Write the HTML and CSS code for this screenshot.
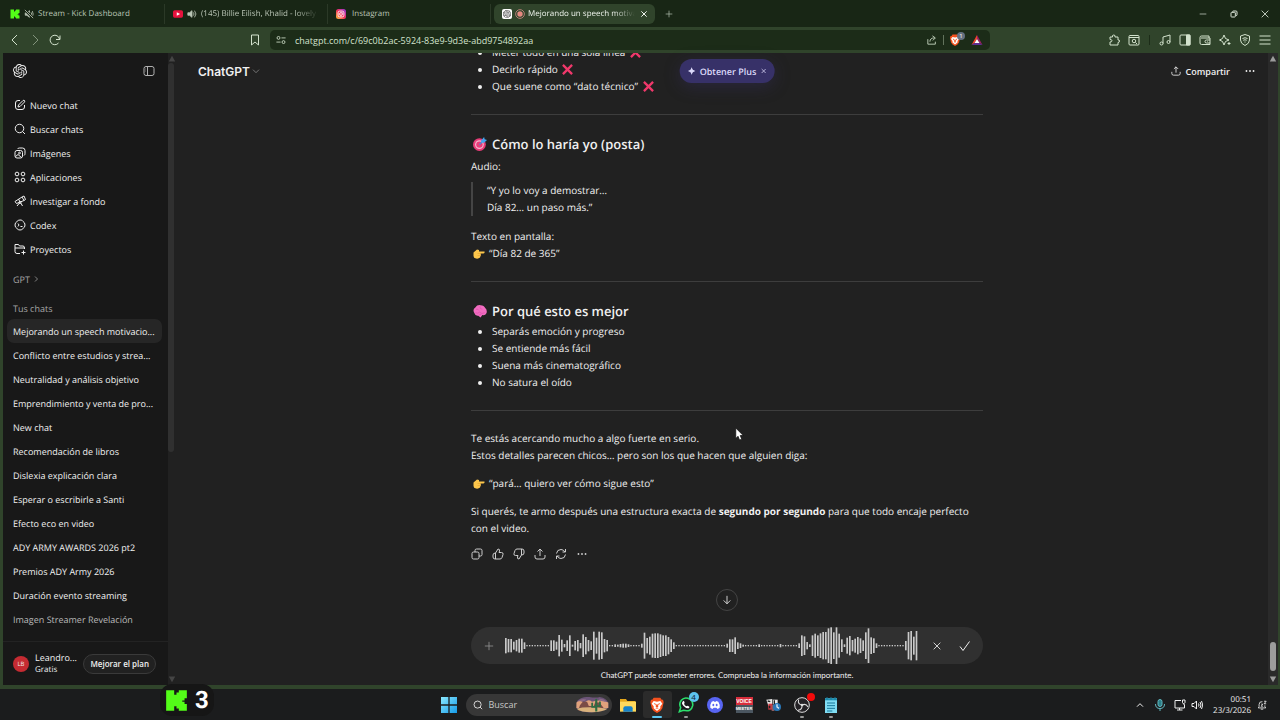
FILE: index.html
```html
<!DOCTYPE html>
<html lang="es">
<head>
    <meta charset="UTF-8">
    <meta name="viewport" content="width=device-width, initial-scale=1.0">
    <title>Mejorando un speech motivacional</title>
    <link rel="stylesheet" href="styles.css">
</head>
<body>
    <!-- Icon sprite -->
    <svg class="sprite" aria-hidden="true">
        <symbol id="kick" viewBox="0 0 20 20"><path fill="#53fc18" stroke="none" d="M1 1h7v4h2V3h2V1h7v7h-2v2h-2v1h2v2h2v6h-7v-2h-2v-2H8v4H1z"/></symbol>
        <symbol id="muted" viewBox="0 0 24 24"><path fill="currentColor" d="M3 9h4l6-5v16l-6-5H3z"/><path d="M17 8q3 4 0 8M20 5q4 7 0 14"/><path stroke="#182615" stroke-width="6" d="M2 2l20 20"/><path d="M2 2l20 20"/></symbol>
        <symbol id="speaker" viewBox="0 0 24 24"><path fill="currentColor" d="M2 9h4l6-5v16l-6-5H2z"/><path d="M15 8q4 4 0 8M18 4q7 8 0 16"/></symbol>
        <symbol id="volume" viewBox="0 0 24 24"><path d="M2 9h4l5-5v16l-5-5H2zM15 9q2 3 0 6M18 6q4 6 0 12M21 4q5 8 0 16"/></symbol>
        <symbol id="youtube" viewBox="0 0 24 24"><rect x="0" y="3" width="24" height="18" rx="4" fill="#e6123d" stroke="none"/><path d="M9 8l8 4-8 4z" fill="#fff" stroke="none"/></symbol>
        <symbol id="instagram" viewBox="0 0 24 24">
            <linearGradient id="ig" x1="0" y1="1" x2="1" y2="0"><stop offset="0" stop-color="#ffc33b"/><stop offset=".5" stop-color="#f4305f"/><stop offset="1" stop-color="#8a3ae0"/></linearGradient>
            <rect width="24" height="24" rx="6" fill="url(#ig)" stroke="none"/><rect x="5" y="5" width="14" height="14" rx="4" stroke="#fff"/><circle cx="12" cy="12" r="3.4" stroke="#fff"/><circle cx="16" cy="8" r="1" fill="#fff" stroke="none"/></symbol>
        <symbol id="openai" viewBox="0 0 24 24"><path fill="currentColor" stroke="none" d="M22.28 9.82a5.98 5.98 0 0 0-.52-4.91 6.05 6.05 0 0 0-6.51-2.9A6.07 6.07 0 0 0 4.98 4.18a5.98 5.98 0 0 0-4 2.9 6.05 6.05 0 0 0 .74 7.1 5.98 5.98 0 0 0 .51 4.91 6.05 6.05 0 0 0 6.52 2.9A5.98 5.98 0 0 0 13.26 24a6.06 6.06 0 0 0 5.77-4.21 5.99 5.99 0 0 0 4-2.9 6.06 6.06 0 0 0-.75-7.07zm-9.02 12.61a4.48 4.48 0 0 1-2.88-1.04l.14-.08 4.78-2.76a.8.8 0 0 0 .39-.68v-6.74l2.02 1.17a.07.07 0 0 1 .04.05v5.58a4.5 4.5 0 0 1-4.49 4.5zm-9.66-4.13a4.47 4.47 0 0 1-.53-3.01l.14.09 4.78 2.76a.77.77 0 0 0 .78 0l5.84-3.37v2.33a.08.08 0 0 1-.03.06L9.74 19.95a4.5 4.5 0 0 1-6.14-1.65zM2.34 7.9a4.49 4.49 0 0 1 2.37-1.98v5.68a.77.77 0 0 0 .38.68l5.82 3.35-2.02 1.17a.08.08 0 0 1-.07 0l-4.83-2.79A4.5 4.5 0 0 1 2.34 7.87zm16.6 3.86l-5.84-3.4 2.02-1.16a.08.08 0 0 1 .07 0l4.83 2.79a4.49 4.49 0 0 1-.68 8.1v-5.68a.79.79 0 0 0-.4-.65zm2-3.03l-.14-.08-4.77-2.78a.78.78 0 0 0-.79 0L9.41 9.23V6.9a.07.07 0 0 1 .03-.06l4.83-2.79a4.5 4.5 0 0 1 6.67 4.68zM8.31 12.86l-2.02-1.16a.08.08 0 0 1-.04-.06V6.07a4.5 4.5 0 0 1 7.38-3.45l-.14.08-4.78 2.76a.8.8 0 0 0-.4.68zm1.1-2.36L12 9l2.61 1.5v3L12 15l-2.6-1.5z"/></symbol>
        <symbol id="record" viewBox="0 0 24 24"><circle cx="12" cy="12" r="10.5" stroke="#c98a84"/><circle cx="12" cy="12" r="6.5" fill="#e58880" stroke="none"/></symbol>
        <symbol id="close" viewBox="0 0 24 24"><path d="M4 4l16 16M20 4L4 20"/></symbol>
        <symbol id="plus" viewBox="0 0 24 24"><path d="M12 2v20M2 12h20"/></symbol>
        <symbol id="minimize" viewBox="0 0 24 24"><path d="M2 12h20"/></symbol>
        <symbol id="restore" viewBox="0 0 24 24"><rect x="3" y="7" width="13" height="14" rx="2"/><path d="M8 7V5q0-2 2-2h8q3 0 3 3v8q0 3-3 3"/></symbol>
        <symbol id="left" viewBox="0 0 24 24"><path d="M16 2L6 12l10 10"/></symbol>
        <symbol id="right" viewBox="0 0 24 24"><path d="M8 2l10 10L8 22"/></symbol>
        <symbol id="down" viewBox="0 0 24 24"><path d="M3 8l9 9 9-9"/></symbol>
        <symbol id="up" viewBox="0 0 24 24"><path d="M3 17l9-9 9 9"/></symbol>
        <symbol id="reload" viewBox="0 0 24 24"><path d="M19 18a9.500 9.500 0 1 1 2-8M22 3v8h-8"/></symbol>
        <symbol id="bookmark" viewBox="0 0 24 24"><path d="M5 2h14v20l-7-6-7 6z"/></symbol>
        <symbol id="tune" viewBox="0 0 24 24"><circle cx="6" cy="7" r="3.500"/><path d="M13 7h10M1 17h10"/><circle cx="18" cy="17" r="3.500"/></symbol>
        <symbol id="sharebox" viewBox="0 0 24 24"><path d="M2 10v12h18v-6M7 16q0-9 11-9M13 2l7 5-6 6"/></symbol>
        <symbol id="brave" viewBox="0 0 24 24"><path fill="#f4511e" stroke="none" d="M7 1h10l2 3h2l1 4-2 9-3 4-5 3-5-3-3-4-2-9 1-4h2z"/><path fill="#fff" stroke="none" d="M7 6l5 1 5-1 3 4-3 4 0 3-5 4-5-4v-3l-3-4z"/><path fill="#f4511e" stroke="none" d="M7 9l3 1v3zM17 9l-3 1v3zM11 11h2l1 4-2 1-2-1zM9 17h6l-3 1z"/></symbol>
        <symbol id="bat" viewBox="0 0 24 24"><path fill="#f4432c" stroke="none" d="M12 2L1 22l6-4 5-8z"/><path fill="#9b1f63" stroke="none" d="M12 2l11 20-6-4-5-8z"/><path fill="#5c2d91" stroke="none" d="M1 22h22l-6-4H7z"/><path fill="#fff" stroke="none" d="M12 10l5 8H7z"/></symbol>
        <symbol id="puzzle" viewBox="0 0 24 24"><path d="M4 6h5q-1-4 2.500-4T14 6h6v6q3-1 3 2t-3 3v5H4v-6q4 0 4-2.500T4 11z"/></symbol>
        <symbol id="pagesearch" viewBox="0 0 24 24"><rect x="2" y="3" width="20" height="19" rx="2"/><path d="M2 7h20M15 17l3 3"/><circle cx="12" cy="14" r="3.500"/></symbol>
        <symbol id="music" viewBox="0 0 24 24"><path d="M8 19V6l14-4v14"/><circle cx="5" cy="19" r="3"/><circle cx="19" cy="16" r="3"/></symbol>
        <symbol id="panel" viewBox="0 0 24 24"><rect x="2" y="2" width="20" height="20" rx="2"/><path fill="currentColor" d="M15 2h7v20h-7z"/></symbol>
        <symbol id="wallet" viewBox="0 0 24 24"><path d="M20 8V4H5q-3 0-3 3v11q0 3 3 3h17V8H4M22 12h-7q-3 0-3 3t3 3h7"/><path d="M16 15h1"/></symbol>
        <symbol id="leo" viewBox="0 0 24 24"><path d="M10 2l3 7 7 3-7 3-3 7-3-7-6-3 6-3zM20 16v6M17 19h6"/></symbol>
        <symbol id="vpn" viewBox="0 0 24 24"><path d="M12 1l9 3v8q0 7-9 11-9-4-9-11V4zM7 9q5-3 10 0M8.500 12.500q3.500-2 7 0M11 16h2"/></symbol>
        <symbol id="menu" viewBox="0 0 24 24"><path d="M1 4h22M1 12h22M1 20h22"/></symbol>
        <symbol id="side" viewBox="0 0 24 24"><rect x="2" y="3" width="20" height="18" rx="4"/><path d="M9 3v18M5 8h1M5 12h1"/></symbol>
        <symbol id="edit" viewBox="0 0 24 24"><path d="M12 3H8Q3 3 3 8v8q0 5 5 5h8q5 0 5-5v-4M9 12l9-9q2-1 3 0t0 3l-9 9-4 1z"/></symbol>
        <symbol id="search" viewBox="0 0 24 24"><circle cx="11" cy="11" r="8.500"/><path d="M17 17l5 5"/></symbol>
        <symbol id="images" viewBox="0 0 24 24"><rect x="2" y="7" width="15" height="15" rx="4"/><path d="M7 4q1-2 4-2h6q5 0 5 5v6q0 3-2 4M3 19l5-4 7 6"/><circle cx="11" cy="12" r="1.800"/></symbol>
        <symbol id="apps" viewBox="0 0 24 24"><circle cx="6" cy="6" r="3.700"/><circle cx="18" cy="6" r="3.700"/><circle cx="6" cy="18" r="3.700"/><circle cx="18" cy="18" r="3.700"/></symbol>
        <symbol id="telescope" viewBox="0 0 24 24"><path d="M2 13L16 4l4 7-15 6zM16 4l4-2 3 7-3 2M9 8l3 6M11 16l-5 6M13 15l4 7"/><circle cx="12" cy="15" r="2"/></symbol>
        <symbol id="codex" viewBox="0 0 24 24"><path d="M12 2q4-1 6 3 4 2 4 7t-4 7q-2 3-6 3t-6-3q-4-2-4-7t4-7q2-3 6-3zM8 9l2 3-2 3M13 15h4"/></symbol>
        <symbol id="folder" viewBox="0 0 24 24"><path d="M12 21H6q-4 0-4-4V3h7l2 3h7q3 0 3 4v2M2 10h19M19 15v8M15 19h8"/></symbol>
        <symbol id="share" viewBox="0 0 24 24"><path d="M12 16V2M7 7l5-5 5 5M2 14v4q0 4 4 4h12q4 0 4-4v-4"/></symbol>
        <symbol id="dots" viewBox="0 0 24 24"><g fill="currentColor" stroke="none"><circle cx="3.500" cy="12" r="2.200"/><circle cx="12" cy="12" r="2.200"/><circle cx="20.500" cy="12" r="2.200"/></g></symbol>
        <symbol id="spark" viewBox="0 0 24 24"><path fill="currentColor" stroke="none" d="M12 0q1.500 10.500 12 12-10.500 1.500-12 12Q10.500 13.500 0 12 10.500 10.500 12 0z"/><path d="M12 4v16M4 12h16"/></symbol>
        <symbol id="copy" viewBox="0 0 24 24"><rect x="2" y="8" width="14" height="14" rx="3"/><path d="M8 8V5q0-3 3-3h8q3 0 3 3v8q0 3-3 3h-3"/></symbol>
        <symbol id="thumb" viewBox="0 0 24 24"><path d="M7 10l5-8q4 0 3 4l-1 3h5q4 0 3 4l-2 6q-1 3-4 3H6q-4 0-4-4v-4q0-4 5-4zm0 0v12"/></symbol>
        <symbol id="refresh" viewBox="0 0 24 24"><path d="M3 11q1-8 9-8 5 0 8 5M21 2v6h-6M21 13q-1 8-9 8-5 0-8-5M3 22v-6h6"/></symbol>
        <symbol id="arrow" viewBox="0 0 24 24"><path d="M12 2v19M4 13l8 8 8-8"/></symbol>
        <symbol id="check" viewBox="0 0 24 24"><path d="M2 13l6 8L21 3"/></symbol>
        <symbol id="cross" viewBox="0 0 24 24"><path stroke="#f0386b" stroke-width="5" d="M2 2l20 20M22 2L2 22"/></symbol>
        <symbol id="target" viewBox="0 0 24 24"><g stroke="none"><circle cx="11" cy="13" r="11" fill="#e83c78"/><circle cx="11" cy="13" r="7.500" fill="#f3b9d0"/><circle cx="11" cy="13" r="5.500" fill="#e83c78"/></g><path stroke="#3f8fd8" d="M11 13l7-7"/><path fill="#45a5ee" stroke="none" d="M14 6l5-6 1 4 4 1-5 5h-5z"/></symbol>
        <symbol id="brain" viewBox="0 0 24 24"><path fill="#f16cc0" stroke="none" d="M2 15Q-1 9 4 6q3-5 9-4 6 0 8 5 4 4 2 9-2 4-7 3l-3 4-4-3q-5 1-7-5z"/><path stroke="#d74aa6" stroke-width="1" d="M5 9q4-1 5 2M12 4q-1 5 4 5M4 15q5 2 7-1 4 4 9 1M14 18q-2-1-4 1"/></symbol>
        <symbol id="point" viewBox="0 0 24 24"><path fill="#fcc64b" stroke="none" d="M1 11l7-6 4 1v3h11q1 3-2 4h-6l1 3-1 2-1 3q-3 3-8 2-5-1-5-5z"/><path stroke="#e09a28" stroke-width="1" d="M9 13h6M9 17h6"/></symbol>
        <symbol id="cursor" viewBox="0 0 12 18"><path fill="#fff" stroke="#111" stroke-width="1" d="M1 1v14l3-3 2 5 3-1-2-5h4z"/></symbol>
        <symbol id="windows" viewBox="0 0 24 24"><linearGradient id="win" x2="1" y2="1"><stop stop-color="#8be8ff"/><stop offset="1" stop-color="#159be8"/></linearGradient><path fill="url(#win)" stroke="none" d="M0 0h11v11H0zM13 0h11v11H13zM0 13h11v11H0zM13 13h11v11H13z"/></symbol>
        <symbol id="desert" viewBox="0 0 96 48"><g stroke="none"><path fill="#6b5478" d="M6 14Q20 0 40 3t30 0q20 3 24 18v12Q80 44 50 46 16 48 4 34z"/><path fill="#e0a27c" d="M4 18q12-8 22 2 10-14 22-4 24-8 46 2v16H4z"/><path fill="#8a6a86" d="M8 14q12-8 24-4-4 6-12 5t-12-1zM66 8q16-2 22 8-12 2-22-8z"/><path fill="#7a4c46" d="M14 26l8-10h12l5 12h14l4-10h12l12 16-28 10-44-3z"/><path fill="#d9b27c" d="M4 36q30-8 88 0-14 9-44 10Q16 46 4 36z"/><path fill="#2f6b42" d="M57 44V10q3-5 6 0v16h5V16q3-3 5 1v14H63v13zM57 33H46V20q3-3 5 0v8h6z"/></g></symbol>
        <symbol id="explorer" viewBox="0 0 24 24"><g stroke="none"><path fill="#e4a71b" d="M0 3h9l2 3h12v5H0z"/><path fill="#ffd95c" d="M0 7h24v15H0z"/><path fill="#1682c9" d="M5 22v-5q0-3 3-3h8q3 0 3 3v5z"/></g></symbol>
        <symbol id="whatsapp" viewBox="0 0 24 24"><path stroke="#2be06b" stroke-width="2.400" d="M2 22l2-6Q1 10 5 5t10-3q8 3 7 11-2 10-14 7z"/><path fill="#fff" stroke="none" d="M8 6q-4 3 0 7 6 6 9 3 1-2-3-3l-1 1q-3-1-4-4l1-1q-1-4-2-3z"/></symbol>
        <symbol id="discord" viewBox="0 0 24 24"><circle cx="12" cy="12" r="12" fill="#5865f2" stroke="none"/><path fill="#fff" stroke="none" d="M7 7l3-1 1 1h2l1-1 3 1q3 5 2 9l-3 2-2-2H10l-2 2-3-2q-1-4 2-9z"/><ellipse cx="9.500" cy="12" rx="1.400" ry="1.800" fill="#5865f2" stroke="none"/><ellipse cx="14.500" cy="12" rx="1.400" ry="1.800" fill="#5865f2" stroke="none"/></symbol>
        <symbol id="deck" viewBox="0 0 24 24"><g stroke="none"><path fill="#ececec" d="M2 4l9-1v8l-6 2z"/><path fill="#d23b45" d="M5 10h6v9H5z"/><path fill="#e9e9e9" d="M12 4h7v7h-7z"/><path fill="#8c5a5e" d="M10 12h4v9h-4z"/><circle cx="18" cy="15" r="6" fill="#2977b8"/></g><path stroke="#222" d="M4 6l4 1M14 5v6M7 13v4"/><path stroke="#dfe9f0" d="M18 11v4l3 2"/></symbol>
        <symbol id="obs" viewBox="0 0 24 24"><circle cx="12" cy="12" r="11" fill="#242226" stroke="#ddd" stroke-width="1.500"/><path stroke="#ddd" stroke-width="1.600" d="M12 12Q5 11 7 4M12 12q6-3 9 3M12 12q1 7-6 8"/><circle cx="12" cy="12" r="2" fill="#ddd" stroke="none"/></symbol>
        <symbol id="notepad" viewBox="0 0 24 24"><g stroke="none"><path fill="#80dcf2" d="M3 2h18v22H3z"/><path fill="#1f93b5" d="M3 2h18v3H3z"/></g><path stroke="#16779a" stroke-width="1.500" d="M6 9h12M6 13h12M6 17h12M6 21h8M6 0v4M12 0v4M18 0v4"/></symbol>
        <symbol id="mic" viewBox="0 0 24 24"><rect x="8" y="1" width="8" height="14" rx="4" fill="#2b7f88"/><path d="M3 10q0 9 9 9t9-9M12 19v5"/></symbol>
        <symbol id="network" viewBox="0 0 24 24"><path d="M14 3H2v15h19v-7M11 18v4M6 22h11M17 2v5q0 2 2 2t3-2V2zM20 9v3"/></symbol>
        <symbol id="bell" viewBox="0 0 24 24"><path d="M13 4Q5 3 5 11v5l-2 3h18l-2-3v-3M9 22h6M10 10h4l-4 5h4M17 3h5l-5 6h5"/></symbol>
        <symbol id="triup" viewBox="0 0 10 10"><path fill="currentColor" stroke="none" d="M5 1l4 7H1z"/></symbol>
        <symbol id="tridown" viewBox="0 0 10 10"><path fill="currentColor" stroke="none" d="M5 9l4-7H1z"/></symbol>
    </svg>

    <div class="browser">
        <div class="tabs">
            <a class="tab" href="#"><svg class="i10"><use href="#kick"/></svg><svg class="i10"><use href="#muted"/></svg><span>Stream - Kick Dashboard</span></a>
            <a class="tab" href="#"><svg class="i10"><use href="#youtube"/></svg><svg class="i10"><use href="#speaker"/></svg><span class="fade">(145) Billie Eilish, Khalid - lovely -</span></a>
            <a class="tab" href="#"><svg class="i10"><use href="#instagram"/></svg><span class="wide">Instagram</span></a>
            <div class="tab active">
                <svg class="i10 favicon"><use href="#openai"/></svg><svg class="i10"><use href="#record"/></svg><span class="fade">Mejorando un speech motiva</span>
                <button class="icon" aria-label="Cerrar pestaña"><svg class="i8 bold"><use href="#close"/></svg></button>
            </div>
            <button class="icon new-tab" aria-label="Nueva pestaña"><svg class="i8"><use href="#plus"/></svg></button>
            <div class="window-buttons">
                <button class="icon" aria-label="Minimizar"><svg class="i8"><use href="#minimize"/></svg></button>
                <button class="icon" aria-label="Restaurar"><svg class="i8 bold"><use href="#restore"/></svg></button>
                <button class="icon" aria-label="Cerrar"><svg class="i10"><use href="#close"/></svg></button>
            </div>
        </div>

        <div class="toolbar">
            <div class="nav-buttons">
                <button class="icon" aria-label="Atrás"><svg class="i12"><use href="#left"/></svg></button>
                <button class="icon dim" aria-label="Adelante"><svg class="i12"><use href="#right"/></svg></button>
                <button class="icon" aria-label="Recargar"><svg class="i12"><use href="#reload"/></svg></button>
                <button class="icon save" aria-label="Marcador"><svg class="i12"><use href="#bookmark"/></svg></button>
            </div>
            <div class="address">
                <svg class="i10 site"><use href="#tune"/></svg>
                <input type="text" aria-label="Dirección" value="chatgpt.com/c/69c0b2ac-5924-83e9-9d3e-abd9754892aa">
                <button class="icon" aria-label="Compartir página"><svg class="i10"><use href="#sharebox"/></svg></button>
                <span class="divider"></span>
                <button class="icon shield" aria-label="Brave Shields"><svg class="i12"><use href="#brave"/></svg><span class="count">1</span></button>
                <button class="icon" aria-label="Rewards"><svg class="i12"><use href="#bat"/></svg></button>
            </div>
            <div class="tools">
                <button class="icon" aria-label="Extensiones"><svg class="i12"><use href="#puzzle"/></svg></button>
                <button class="icon" aria-label="Buscar en página"><svg class="i12"><use href="#pagesearch"/></svg></button>
                <span class="divider dark"></span>
                <button class="icon" aria-label="Música"><svg class="i12"><use href="#music"/></svg></button>
                <button class="icon" aria-label="Panel"><svg class="i12"><use href="#panel"/></svg></button>
                <button class="icon" aria-label="Billetera"><svg class="i12"><use href="#wallet"/></svg></button>
                <button class="icon" aria-label="Leo"><svg class="i12"><use href="#leo"/></svg></button>
                <button class="icon" aria-label="VPN"><svg class="i12"><use href="#vpn"/></svg></button>
                <button class="icon" aria-label="Menú"><svg class="i12"><use href="#menu"/></svg></button>
            </div>
        </div>

        <div class="page">
            <aside class="sidebar">
                <div class="side-head">
                    <a href="#" aria-label="ChatGPT"><svg class="i14"><use href="#openai"/></svg></a>
                    <button class="icon muted" aria-label="Cerrar barra lateral"><svg class="i12"><use href="#side"/></svg></button>
                </div>
                <nav class="links">
                    <a href="#"><svg class="i12"><use href="#edit"/></svg>Nuevo chat</a>
                    <a href="#"><svg class="i12"><use href="#search"/></svg>Buscar chats</a>
                    <a href="#"><svg class="i12"><use href="#images"/></svg>Imágenes</a>
                    <a href="#"><svg class="i12"><use href="#apps"/></svg>Aplicaciones</a>
                    <a href="#"><svg class="i12"><use href="#telescope"/></svg>Investigar a fondo</a>
                    <a href="#"><svg class="i12"><use href="#codex"/></svg>Codex</a>
                    <a href="#"><svg class="i12"><use href="#folder"/></svg>Proyectos</a>
                </nav>
                <h2 class="group">GPT <svg class="i6 bold"><use href="#right"/></svg></h2>
                <h2 class="group">Tus chats</h2>
                <nav class="chats">
                    <a class="current" href="#">Mejorando un speech motivacio...</a>
                    <a href="#">Conflicto entre estudios y strea...</a>
                    <a href="#">Neutralidad y análisis objetivo</a>
                    <a href="#">Emprendimiento y venta de pro...</a>
                    <a href="#">New chat</a>
                    <a href="#">Recomendación de libros</a>
                    <a href="#">Dislexia explicación clara</a>
                    <a href="#">Esperar o escribirle a Santi</a>
                    <a href="#">Efecto eco en video</a>
                    <a href="#">ADY ARMY AWARDS 2026 pt2</a>
                    <a href="#">Premios ADY Army 2026</a>
                    <a href="#">Duración evento streaming</a>
                    <a class="faded" href="#">Imagen Streamer Revelación</a>
                </nav>
                <div class="account">
                    <span class="avatar">LB</span>
                    <div class="who"><div>Leandro...</div><div class="plan">Gratis</div></div>
                    <button class="upgrade">Mejorar el plan</button>
                </div>
            </aside>
            <div class="side-scroll"><svg class="i8"><use href="#triup"/></svg><div class="thumb"></div><svg class="i8"><use href="#tridown"/></svg></div>

            <main class="chat">
                <header class="chat-head">
                    <button class="model">ChatGPT <svg class="i8"><use href="#down"/></svg></button>
                    <div class="head-right">
                        <button class="share"><svg class="i10"><use href="#share"/></svg>Compartir</button>
                        <button class="icon" aria-label="Más"><svg class="i10"><use href="#dots"/></svg></button>
                    </div>
                </header>
                <div class="plus-pill"><svg class="i8"><use href="#spark"/></svg><a href="#">Obtener Plus</a><button class="dismiss" aria-label="Descartar"><svg class="i6 bold"><use href="#close"/></svg></button></div>

                <div class="thread">
                    <article class="message">
                        <ul>
                            <li>Meter todo en una sola línea <svg class="emoji"><use href="#cross"/></svg></li>
                            <li>Decirlo rápido <svg class="emoji"><use href="#cross"/></svg></li>
                            <li>Que suene como “dato técnico” <svg class="emoji"><use href="#cross"/></svg></li>
                        </ul>
                        <hr>
                        <h3><svg class="emoji big"><use href="#target"/></svg>Cómo lo haría yo (posta)</h3>
                        <p>Audio:</p>
                        <blockquote>“Y yo lo voy a demostrar…<br>Día 82… un paso más.”</blockquote>
                        <p>Texto en pantalla:<br><svg class="emoji hand"><use href="#point"/></svg>“Día 82 de 365”</p>
                        <hr>
                        <h3><svg class="emoji big"><use href="#brain"/></svg>Por qué esto es mejor</h3>
                        <ul>
                            <li>Separás emoción y progreso</li>
                            <li>Se entiende más fácil</li>
                            <li>Suena más cinematográfico</li>
                            <li>No satura el oído</li>
                        </ul>
                        <hr>
                        <p>Te estás acercando mucho a algo fuerte en serio.<br>Estos detalles parecen chicos… pero son los que hacen que alguien diga:</p>
                        <p><svg class="emoji hand"><use href="#point"/></svg>“pará… quiero ver cómo sigue esto”</p>
                        <p>Si querés, te armo después una estructura exacta de <strong>segundo por segundo</strong> para que todo encaje perfecto con el video.</p>
                        <div class="actions">
                            <button class="icon" aria-label="Copiar"><svg class="i12"><use href="#copy"/></svg></button>
                            <button class="icon" aria-label="Buena respuesta"><svg class="i12"><use href="#thumb"/></svg></button>
                            <button class="icon flip" aria-label="Mala respuesta"><svg class="i12"><use href="#thumb"/></svg></button>
                            <button class="icon" aria-label="Compartir"><svg class="i12"><use href="#share"/></svg></button>
                            <button class="icon" aria-label="Regenerar"><svg class="i12"><use href="#refresh"/></svg></button>
                            <button class="icon" aria-label="Más acciones"><svg class="i10"><use href="#dots"/></svg></button>
                        </div>
                    </article>
                </div>

                <footer class="bottom">
                    <button class="to-end" aria-label="Ir al final"><svg class="i10"><use href="#arrow"/></svg></button>
                    <div class="composer">
                        <button class="icon dim" aria-label="Adjuntar"><svg class="i10"><use href="#plus"/></svg></button>
                        <svg id="wave" class="wave" viewBox="0 0 1242 111" preserveAspectRatio="xMinYMid meet"></svg>
                        <button class="icon" aria-label="Cancelar"><svg class="i10"><use href="#close"/></svg></button>
                        <button class="icon" aria-label="Aceptar"><svg class="i12"><use href="#check"/></svg></button>
                    </div>
                    <p class="notice">ChatGPT puede cometer errores. Comprueba la información importante.</p>
                </footer>
                <div class="main-scroll"><svg class="i8"><use href="#triup"/></svg><div class="thumb"></div><svg class="i8"><use href="#tridown"/></svg></div>
            </main>
        </div>
    </div>

    <div class="taskbar">
        <div class="apps">
            <button class="app" aria-label="Inicio"><svg class="i16"><use href="#windows"/></svg></button>
            <label class="task-search"><svg class="i10"><use href="#search"/></svg><input type="text" aria-label="Buscar" placeholder="Buscar"><svg class="scene"><use href="#desert"/></svg></label>
            <button class="app" aria-label="Explorador"><svg class="i16"><use href="#explorer"/></svg></button>
            <button class="app focused" aria-label="Brave"><svg class="i16"><use href="#brave"/></svg></button>
            <button class="app running" aria-label="WhatsApp"><svg class="i16"><use href="#whatsapp"/></svg><span class="badge">4</span></button>
            <button class="app" aria-label="Discord"><svg class="i16"><use href="#discord"/></svg></button>
            <button class="app" aria-label="Voicemeeter"><span class="voice"><b>VOICE</b><b>MEETER</b></span></button>
            <button class="app" aria-label="Deck"><svg class="i16"><use href="#deck"/></svg></button>
            <button class="app running" aria-label="OBS"><svg class="i16"><use href="#obs"/></svg><span class="badge red"></span></button>
            <button class="app running" aria-label="Bloc de notas"><svg class="i16"><use href="#notepad"/></svg></button>
        </div>
        <div class="tray">
            <button class="icon" aria-label="Iconos ocultos"><svg class="i8 bold"><use href="#up"/></svg></button>
            <svg class="i12 teal"><use href="#mic"/></svg>
            <span class="pair"><svg class="i12"><use href="#network"/></svg><svg class="i12"><use href="#volume"/></svg></span>
            <div class="clock">00:51<br>23/3/2026</div>
            <svg class="i10"><use href="#bell"/></svg>
        </div>
    </div>

    <div class="viewers"><svg class="k"><use href="#kick"/></svg>3</div>
    <svg class="pointer"><use href="#cursor"/></svg>

    <script src="wave.js"></script>
</body>
</html>
```
FILE: styles.css
```css
* {
    box-sizing: border-box;
}
body {
    margin: 0;
    height: 100vh;
    display: flex;
    flex-direction: column;
    overflow: hidden;
    background: #1b1c1d;
    color: #f0f0f0;
    font-family: "Open Sans", "Noto Sans", sans-serif;
    font-size: 10px;
    line-height: 17px;
    text-rendering: geometricPrecision;
}
a {
    color: inherit;
    text-decoration: none;
}
button, input {
    font: inherit;
    color: inherit;
    background: none;
    border: 0;
    padding: 0;
    margin: 0;
}
input {
    min-width: 0;
    flex: 1;
    outline: none;
    font-size: 9px;
}
button {
    cursor: pointer;
}
h2, h3, p, ul, blockquote {
    margin: 0;
}
svg {
    flex: none;
    fill: none;
    stroke: currentColor;
    stroke-width: 2;
    display: block;
}
.sprite {
    position: absolute;
    width: 0;
    height: 0;
}
.i6 { width: 6px; height: 6px; }
.i8 { width: 8px; height: 8px; }
.i10 { width: 10px; height: 10px; }
.i12 { width: 12px; height: 12px; }
.i14 { width: 14px; height: 14px; }
.i16 { width: 16px; height: 16px; }
.bold { stroke-width: 3; }
.icon {
    display: flex;
    align-items: center;
    justify-content: center;
    min-width: 12px;
    height: 16px;
}
.dim {
    opacity: .5;
}
.muted {
    color: #b0b0b0;
}

/* browser frame */
.browser {
    flex: 1;
    min-height: 0;
    display: flex;
    flex-direction: column;
    background: #30442b;
}
.tabs {
    height: 27px;
    display: flex;
    align-items: center;
    padding-left: 2px;
    background: #182615;
    color: #bac5b6;
    font-size: 8px;
}
.tab {
    flex: 0 1 163px;
    min-width: 0;
    height: 20px;
    padding: 0 8px;
    display: flex;
    align-items: center;
    gap: 4px;
    white-space: nowrap;
    border-right: 1px solid #2b3927;
}
.tab span {
    flex: 1;
    min-width: 0;
}
.tab .wide {
    padding-left: 2px;
}
.fade {
    mask-image: linear-gradient(to right, #000 80%, transparent);
}
.tab.active {
    background: #30442b;
    color: #eef3ec;
    border: 0;
    border-radius: 6px;
    margin-left: 3px;
    padding-right: 5px;
    flex-basis: 161px;
    gap: 3px;
}
.favicon {
    background: #fff;
    color: #333;
    border-radius: 2px;
    padding: 1px;
}
.new-tab {
    margin-left: 8px;
}
.window-buttons {
    margin-left: auto;
    display: flex;
    gap: 19px;
    padding-right: 9px;
    color: #dbe4d8;
}
.toolbar {
    height: 26px;
    display: grid;
    grid-template-columns: 270fr 720fr 290fr;
    align-items: center;
    color: #d3e2cd;
}
.nav-buttons, .tools {
    display: flex;
    align-items: center;
    gap: 8px;
    padding: 0 9px;
}
.save {
    margin-left: auto;
}
.tools {
    justify-content: flex-end;
}
.address {
    height: 20px;
    display: flex;
    align-items: center;
    gap: 5px;
    padding: 0 7px 0 6px;
    border-radius: 5px;
    background: #1c2c18;
}
.site {
    margin-right: 4px;
}
.divider {
    width: 1px;
    height: 10px;
    background: #62735c;
}
.divider.dark {
    background: #1c2c18;
    margin: 0 1px;
}
.shield {
    position: relative;
    margin-right: 5px;
}
.count {
    position: absolute;
    top: 0;
    right: -4px;
    width: 8px;
    height: 8px;
    border-radius: 4px;
    background: #657080;
    color: #fff;
    font-size: 6px;
    line-height: 8px;
}
.page {
    flex: 1;
    min-height: 0;
    display: flex;
    margin: 0 2px 4px 3px;
}

/* sidebar */
.sidebar {
    width: 165px;
    display: flex;
    flex-direction: column;
    padding: 0 6px 0 4px;
    background: #181818;
    font-size: 9px;
}
.side-head {
    height: 36px;
    margin-bottom: 4px;
    padding: 0 7px 0 6px;
    display: flex;
    align-items: center;
    justify-content: space-between;
}
.links a, .chats a {
    display: flex;
    align-items: center;
    gap: 4px;
    height: 24px;
    padding: 0 6px;
    white-space: nowrap;
    border-radius: 7px;
}
.links a {
    padding-left: 7px;
}
.group {
    height: 22px;
    margin-top: 7px;
    padding: 0 6px;
    display: flex;
    align-items: center;
    gap: 3px;
    color: #a5a5a5;
    font-size: 9px;
    font-weight: 400;
}
.chats .current {
    background: #262626;
}
.chats .faded {
    color: #b8b8b8;
}
.account {
    margin: auto -6px 0 -4px;
    height: 44px;
    padding: 0 12px 0 10px;
    display: flex;
    align-items: center;
    gap: 6px;
    border-top: 1px solid #232323;
}
.avatar {
    flex: none;
    width: 16px;
    height: 16px;
    border-radius: 8px;
    background: #c52b32;
    font-size: 6px;
    line-height: 16px;
    text-align: center;
}
.who {
    line-height: 12px;
}
.plan {
    font-size: 8px;
}
.upgrade {
    margin-left: auto;
    height: 20px;
    padding: 0 6px;
    border: 1px solid #3a3a3a;
    border-radius: 10px;
    background: #212121;
    font-size: 8px;
    font-weight: 600;
    white-space: nowrap;
}
.side-scroll, .main-scroll {
    display: flex;
    flex-direction: column;
    align-items: center;
    padding: 2px 0;
    background: #212121;
    color: #454545;
}
.side-scroll {
    width: 8px;
    align-items: flex-start;
}
.side-scroll .thumb {
    width: 6px;
    flex: 0 0 62%;
    margin-bottom: auto;
    border-radius: 3px;
    background: #303030;
}

/* conversation */
.chat {
    position: relative;
    flex: 1;
    min-width: 0;
    display: flex;
    flex-direction: column;
    background: #212121;
}
.chat-head {
    position: absolute;
    top: 0;
    left: 0;
    right: 0;
    height: 36px;
    padding: 0 22px;
    display: flex;
    align-items: center;
    justify-content: space-between;
}
.model {
    display: flex;
    align-items: center;
    gap: 2px;
    font-family: Inter, sans-serif;
    font-size: 12px;
    font-weight: 600;
}
.model svg {
    color: #a0a0a0;
}
.head-right, .share {
    display: flex;
    align-items: center;
    gap: 5px;
}
.head-right {
    gap: 14px;
}
.share {
    font-size: 9px;
    font-weight: 600;
}
.plus-pill {
    position: absolute;
    top: 6px;
    left: 50%;
    transform: translateX(-50%);
    height: 24px;
    padding: 0 8px;
    display: flex;
    align-items: center;
    gap: 4px;
    border-radius: 12px;
    background: #373168;
    color: #dddafa;
    font-size: 9px;
    font-weight: 600;
    white-space: nowrap;
    box-shadow: 0 4px 16px #37316860;
}
.thread {
    flex: 1;
    min-height: 0;
    overflow: hidden;
    display: flex;
    flex-direction: column;
    justify-content: flex-end;
    align-items: center;
}
.message {
    width: 100%;
    max-width: 512px;
    padding-bottom: 27px;
}
.message ul {
    padding-left: 21px;
}
.message p + p {
    margin-top: 11px;
}
hr {
    height: 1px;
    margin: 19px 0;
    border: 0;
    background: #3d3d3d;
}
h3 {
    display: flex;
    align-items: center;
    gap: 5px;
    font-size: 13px;
    font-weight: 600;
    line-height: 20px;
}
h3 + p {
    margin-top: 4px;
}
h3 + ul {
    margin-top: 2px;
}
blockquote {
    margin: 7px 0 12px;
    padding-left: 14px;
    border-left: 2px solid #454545;
}
.emoji {
    display: inline-block;
    width: 11px;
    height: 11px;
    margin-left: 2px;
    vertical-align: -2px;
}
.big {
    width: 14px;
    height: 14px;
}
.hand {
    width: 12px;
    height: 12px;
    margin-right: 4px;
}
.actions {
    display: flex;
    gap: 9px;
    margin-top: 9px;
    color: #cdcdcd;
}
.flip {
    transform: rotate(180deg);
}
.bottom {
    display: flex;
    flex-direction: column;
    align-items: center;
    width: 100%;
}
.to-end {
    width: 22px;
    height: 22px;
    display: grid;
    place-items: center;
    border: 1px solid #444;
    border-radius: 11px;
}
.composer {
    width: 100%;
    max-width: 512px;
    height: 37px;
    margin-top: 16px;
    padding: 0 12px;
    display: flex;
    align-items: center;
    gap: 10px;
    border-radius: 19px;
    background: #303030;
}
.wave {
    flex: 1;
    min-width: 0;
    height: 37px;
    fill: #c9c9c9;
    stroke: none;
}
.composer .icon + .icon {
    margin-left: 6px;
}
.notice {
    height: 21px;
    padding-top: 3px;
    font-family: Lato, sans-serif;
    font-size: 8px;
}
.main-scroll {
    position: absolute;
    top: 0;
    right: 0;
    bottom: 0;
    width: 10px;
    background: #2a2a2a;
    color: #9c9c9c;
}
.main-scroll .thumb {
    width: 6px;
    height: 29px;
    margin: auto 0 4px;
    border-radius: 3px;
    background: #9c9c9c;
}

/* taskbar */
.taskbar {
    height: 31px;
    display: grid;
    grid-template-columns: 1fr auto 1fr;
    align-items: center;
}
.apps {
    grid-column: 2;
    display: flex;
    align-items: center;
}
.app {
    position: relative;
    width: 29px;
    height: 27px;
    display: grid;
    place-items: center;
    border-radius: 3px;
}
.focused {
    background: #2b2b2b;
}
.focused::after, .running::after {
    content: "";
    position: absolute;
    bottom: 0;
    left: 50%;
    width: 4px;
    height: 2px;
    margin-left: -2px;
    border-radius: 1px;
    background: #999;
}
.focused::after {
    width: 10px;
    margin-left: -5px;
    background: #5cc8f5;
}
.badge {
    position: absolute;
    top: 1px;
    right: 2px;
    width: 10px;
    height: 10px;
    border-radius: 5px;
    background: #5dc3ef;
    color: #102030;
    font-size: 8px;
    line-height: 10px;
}
.badge.red {
    top: 2px;
    width: 8px;
    height: 8px;
    background: #f30b0b;
}
.task-search {
    width: 146px;
    height: 22px;
    margin: 0 2px;
    padding: 0 3px 0 7px;
    display: flex;
    align-items: center;
    gap: 6px;
    border-radius: 11px;
    background: #373737;
}
.task-search input {
    width: 0;
}
.task-search input::placeholder {
    color: #c8c8c8;
    opacity: 1;
}
.scene {
    width: 34px;
    height: 17px;
}
.voice b {
    display: block;
    width: 17px;
    background: #d92e3c;
    color: #fff;
    font: 700 5px/8px "Liberation Sans", sans-serif;
}
.voice b + b {
    background: #4b5660;
    font-size: 4px;
}
.tray {
    display: flex;
    justify-content: flex-end;
    align-items: center;
    gap: 8px;
    padding-right: 13px;
}
.teal {
    color: #62b5bd;
}
.pair {
    display: flex;
    gap: 5px;
}
.clock {
    margin: 0 -2px 0 2px;
    font-size: 8px;
    line-height: 11px;
    text-align: right;
}

/* overlays */
.viewers {
    position: absolute;
    left: 160px;
    bottom: 4px;
    width: 54px;
    height: 32px;
    display: flex;
    align-items: center;
    justify-content: center;
    gap: 7px;
    border-radius: 12px;
    background: #161616;
    color: #fff;
    font-family: Roboto, sans-serif;
    font-size: 24px;
    font-weight: 700;
}
.k {
    width: 23px;
    height: 23px;
}
.pointer {
    position: absolute;
    left: 735px;
    top: 427px;
    width: 9px;
    height: 14px;
}
```
FILE: wave.js
```js
// Recorded voice levels, one value per bar. 4 is silence.
const levels = [
    46, 40, 40, 24, 34, 42, 42, 20, ...silence(9),
    32, 32, 24, 64, 36, 10, 32, 62, 6, 28, 34, 16, 68, 52, 34, 26, 84, 48, 84, 80, 40, 34,
    4, 4, 8, 6, 10, 12, 12, 8, ...silence(4),
    12, 78, 46, 54, 72, 74, 74, 68, 62, 62, 52, 38, 20, ...silence(19),
    12, 38, 38, 50, 20, 14, 6, ...silence(5), 8, ...silence(7), 10, ...silence(6),
    14, 62, 56, 22, 8, 62, 72, 62, 74, 82, 82, 104, 110, 80, 110, 72, 38, 8,
    48, 58, 34, 42, 52, 44, 32, 80, 104, 50, 44, 14, ...silence(10),
    28, 82, 88, 54, 88
];

function silence(count) {
    return Array(count).fill(4);
}

const wave = document.getElementById("wave");
levels.forEach((level, i) => {
    const bar = document.createElementNS("http://www.w3.org/2000/svg", "rect");
    bar.setAttribute("x", i * 8);
    bar.setAttribute("y", 56 - level / 2);
    bar.setAttribute("width", level > 4 ? 5 : 4);
    bar.setAttribute("height", level);
    wave.appendChild(bar);
});
```
